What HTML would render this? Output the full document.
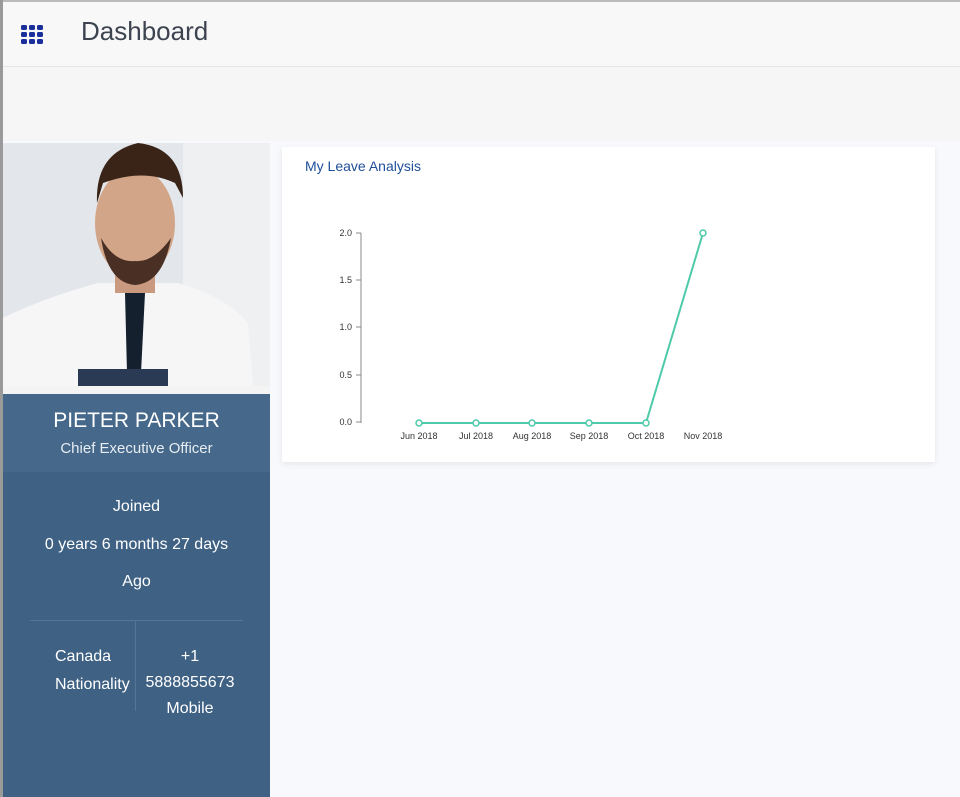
<!DOCTYPE html>
<html><head><style>
body{margin:0;width:960px;height:797px;overflow:hidden;background:#f8f9fc;font-family:"Liberation Sans",sans-serif;position:relative}
.abs{position:absolute}
</style></head><body>
<div class="abs" style="left:0;top:0;width:960px;height:2px;background:#bbb"></div>
<div class="abs" style="left:0;top:0;width:3px;height:797px;background:#9a9a9a"></div>
<div class="abs" style="left:3px;top:2px;width:957px;height:64px;background:#f8f8f8;border-bottom:1px solid #e6e6e6"></div>
<div class="abs" style="left:3px;top:67px;width:957px;height:74px;background:#f6f6f6"></div>
<svg class="abs" style="left:21px;top:25px" width="24" height="20">
<g fill="#1a2f9a">
<rect x="0" y="0" width="6" height="5" rx="1.5"/><rect x="8" y="0" width="6" height="5" rx="1.5"/><rect x="16" y="0" width="6" height="5" rx="1.5"/>
<rect x="0" y="7" width="6" height="5" rx="1.5"/><rect x="8" y="7" width="6" height="5" rx="1.5"/><rect x="16" y="7" width="6" height="5" rx="1.5"/>
<rect x="0" y="14" width="6" height="5" rx="1.5"/><rect x="8" y="14" width="6" height="5" rx="1.5"/><rect x="16" y="14" width="6" height="5" rx="1.5"/>
</g></svg>
<div class="abs" style="left:81px;top:16px;font-size:26px;color:#3d4450">Dashboard</div>

<svg class="abs" style="left:3px;top:143px" width="267" height="243">
<rect width="267" height="243" fill="#e3e6ea"/>
<rect x="180" width="87" height="243" fill="#eef0f2"/>
<path d="M0 243 L0 175 Q40 155 95 140 L175 140 Q225 155 245 180 L250 243Z" fill="#f6f6f6"/>
<rect x="112" y="120" width="40" height="30" fill="#c99a80"/>
<ellipse cx="132" cy="80" rx="40" ry="55" fill="#d3a588"/>
<path d="M94 60 Q92 10 135 0 Q180 5 180 55 L172 40 Q140 25 100 40Z" fill="#3a2418"/>
<path d="M98 95 Q105 140 132 142 Q160 140 168 95 Q150 120 132 118 Q112 120 98 95Z" fill="#4a3024"/>
<path d="M122 150 L142 150 L138 230 L124 230Z" fill="#14202e"/>
<rect x="75" y="226" width="90" height="17" fill="#2a3a55"/>
</svg>
<div class="abs" style="left:3px;top:386px;width:267px;height:8px;background:#f4f4f4"></div>
<div class="abs" style="left:3px;top:394px;width:267px;height:403px;background:#3f6184"></div>
<div class="abs" style="left:3px;top:394px;width:267px;height:78px;background:#45688b;color:#fff;text-align:center">
<div style="font-size:21px;margin-top:15px">PIETER PARKER</div>
<div style="font-size:15px;margin-top:7px;color:#e8edf2">Chief Executive Officer</div>
</div>
<div class="abs" style="left:3px;top:488px;width:267px;color:#fff;text-align:center;font-size:16px;line-height:37.5px">Joined<br>0 years 6 months 27 days<br>Ago</div>
<div class="abs" style="left:30px;top:620px;width:213px;height:1px;background:#557595"></div>
<div class="abs" style="left:135px;top:621px;width:1px;height:90px;background:#557595"></div>
<div class="abs" style="left:55px;top:643px;color:#fff;font-size:16px;line-height:28px">Canada<br>Nationality</div>
<div class="abs" style="left:135px;top:644px;width:110px;color:#fff;text-align:center;font-size:16px;line-height:26px">+1<br>5888855673<br>Mobile</div>

<div class="abs" style="left:282px;top:147px;width:653px;height:315px;background:#fff;box-shadow:0 2px 6px rgba(0,0,0,.08)"></div>
<div class="abs" style="left:305px;top:158px;font-size:14px;color:#1f4e9a">My Leave Analysis</div>
<svg class="abs" style="left:282px;top:147px" width="653" height="315" font-family="Liberation Sans" font-size="9" fill="#333">
<g stroke="#888" stroke-width="1">
<line x1="79" y1="86" x2="79" y2="276"/>
<line x1="74" y1="86" x2="79" y2="86"/><line x1="74" y1="133" x2="79" y2="133"/><line x1="74" y1="180" x2="79" y2="180"/><line x1="74" y1="228" x2="79" y2="228"/><line x1="74" y1="275" x2="79" y2="275"/>
</g>
<g text-anchor="end"><text x="70" y="89">2.0</text><text x="70" y="136">1.5</text><text x="70" y="183">1.0</text><text x="70" y="231">0.5</text><text x="70" y="278">0.0</text></g>
<polyline points="137,276 194,276 250,276 307,276 364,276 421,86" fill="none" stroke="#4ec9a9" stroke-width="2"/>
<g fill="#fff" stroke="#4ec9a9" stroke-width="1.5">
<circle cx="137" cy="276" r="3"/><circle cx="194" cy="276" r="3"/><circle cx="250" cy="276" r="3"/><circle cx="307" cy="276" r="3"/><circle cx="364" cy="276" r="3"/><circle cx="421" cy="86" r="3"/></g>
<g text-anchor="middle"><text x="137" y="292">Jun 2018</text><text x="194" y="292">Jul 2018</text><text x="250" y="292">Aug 2018</text><text x="307" y="292">Sep 2018</text><text x="364" y="292">Oct 2018</text><text x="421" y="292">Nov 2018</text></g>
</svg>
</body></html>
